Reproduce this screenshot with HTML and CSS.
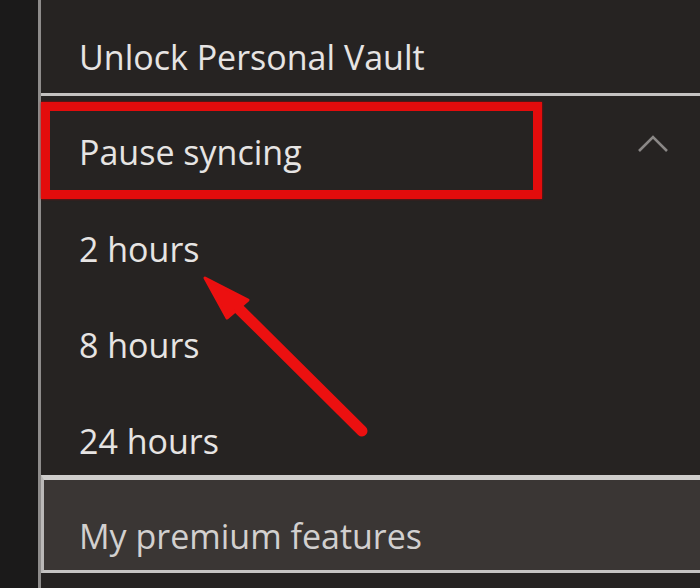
FILE: index.html
```html
<!DOCTYPE html>
<html lang="en">
<head>
<meta charset="utf-8">
<title>OneDrive settings menu</title>
<link rel="stylesheet" href="styles.css">
</head>
<body>
<div class="app">
  <div class="rail"></div>
  <div class="panel">
    <div class="row row-first">Unlock Personal Vault</div>
    <div class="row row-pause">
      <span>Pause syncing</span>
      <svg class="chevron" width="32" height="20" viewBox="0 0 32 20" aria-hidden="true">
        <polyline points="2,17 16,3 30,17" fill="none" stroke="#8a8786" stroke-width="2.6"/>
      </svg>
    </div>
    <div class="row">2 hours</div>
    <div class="row">8 hours</div>
    <div class="row row-last">24 hours</div>
    <div class="premium">My premium features</div>
    <div class="rest"></div>

    <div class="highlight"></div>
    <svg class="arrow" width="700" height="588" viewBox="0 0 700 588" aria-hidden="true">
      <line x1="238" y1="308" x2="362" y2="431" stroke="#ec1010" stroke-width="11" stroke-linecap="round"/>
      <polygon points="205,278 227,318 248,300" fill="#ec1010" stroke="#ec1010" stroke-width="3" stroke-linejoin="round"/>
    </svg>
  </div>
</div>
</body>
</html>
```

FILE: styles.css
```css
* { box-sizing: border-box; }
html, body { margin: 0; padding: 0; }
body {
  background: #262322;
  font-family: "Open Sans", "Noto Sans", sans-serif;
  color: #e6e4e3;
  width: 700px;
  height: 588px;
  overflow: hidden;
}
.app {
  display: flex;
  height: 588px;
}
.rail {
  width: 38px;
  flex: none;
  background: #1b1a1a;
}
.panel {
  flex: 1;
  position: relative;
  display: flex;
  flex-direction: column;
  border-left: 3px solid #8e8c8b;
  background: #262322;
}
.row {
  height: 96px;
  flex: none;
  padding: 37px 0 0 38px;
  font-size: 34px;
  line-height: 40px;
  display: flex;
  align-items: flex-start;
}
.row-first {
  height: 96px;
  border-bottom: 3px solid #c4c2c1;
}
.row-pause {
  padding-top: 36px;
  justify-content: space-between;
}
.chevron {
  margin: 2px 31px 0 0;
}
.row-last {
  height: 91px;
}
.premium {
  flex: none;
  height: 98px;
  background: #3a3634;
  border-top: 5px solid #cfcdcc;
  border-left: 3px solid #bab8b7;
  border-bottom: 3px solid #c6c4c3;
  padding: 36px 0 0 35px;
  font-size: 34px;
  line-height: 40px;
  color: #d2d0cf;
}
.rest {
  flex: 1;
}
.highlight {
  position: absolute;
  left: 0;
  top: 102px;
  width: 501px;
  height: 97px;
  border: 9px solid #e30c0c;
  box-shadow: 0 0 2px #b00000;
}
.arrow {
  position: absolute;
  left: -41px;
  top: 0;
  pointer-events: none;
}
```
